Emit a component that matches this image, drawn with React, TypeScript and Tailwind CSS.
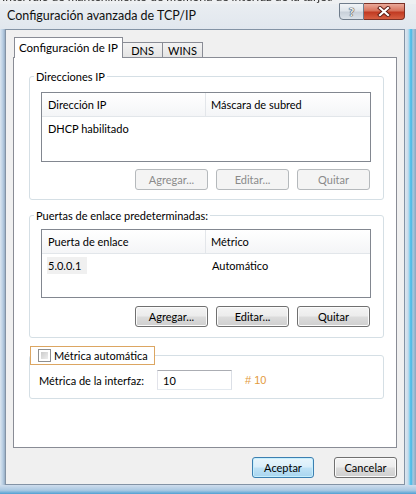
import React from "react";

function Btn({ label, disabled, w = "w-[73px]" }: { label: string; disabled?: boolean; w?: string }) {
  if (disabled) {
    return (
      <div className={`${w} h-[21px] shrink-0 flex items-center justify-center rounded-[3px] border border-[#b5b9bc] bg-[#f4f4f4] text-[#8a8a8a]`}>
        {label}
      </div>
    );
  }
  return (
    <div
      className={`${w} h-[21px] shrink-0 flex items-center justify-center rounded-[3px] border border-[#707070] bg-[linear-gradient(to_bottom,#f4f4f4_0%,#ececec_48%,#dcdcdc_52%,#cfcfcf_100%)] shadow-[inset_0_0_0_1px_#fbfbfb]`}
    >
      {label}
    </div>
  );
}

function ListView({ h, col1, col2, row1, row2, highlight }: { h: string; col1: string; col2: string; row1: string; row2?: string; highlight?: boolean }) {
  return (
    <div className={`w-[330px] ${h} border border-[#828790] bg-white`}>
      <div className="h-[24px] flex border-b border-[#e2e6ea] bg-[linear-gradient(to_bottom,#ffffff,#f4f5f7)]">
        <div className="w-[164px] border-r border-[#e3e6ea] pl-[6px] flex items-center">{col1}</div>
        <div className="pl-[5px] flex items-center">{col2}</div>
      </div>
      <div className="h-[22px] flex items-center">
        <div className="w-[164px] pl-[6px]">
          {highlight ? <span className="bg-[#f0f0f0] py-[2px] pr-[6px] -ml-[1px] pl-[1px]">{row1}</span> : row1}
        </div>
        {row2 ? <div className="pl-[6px]">{row2}</div> : null}
      </div>
    </div>
  );
}

export default function App() {
  return (
    <div className="w-[416px] h-[494px] overflow-hidden flex flex-col bg-[#c9d8e7] font-['Lato','Liberation_Sans',sans-serif] text-[11px] leading-[15px] text-black select-none">
      {/* title bar (with the window behind peeking at the very top) */}
      <div className="h-[29px] flex items-start pl-[7px] bg-[linear-gradient(to_bottom,#eef0f2_0px,#eef0f2_4px,#e9edf1_4px,#e1e7ee_100%)]">
        <div className="w-[325px] flex flex-col">
          <div className="h-[4px] overflow-hidden -ml-[5px]">
            <div className="-mt-[10px] text-[12px] leading-[13px] text-[#2e2e2e] whitespace-nowrap blur-[0.4px]">
              Intervalo de mantenimiento de memoria de interfaz de la tarjeta
            </div>
          </div>
          <div className="mt-[4px] text-[12.5px] leading-[16px] text-[#111] whitespace-nowrap">Configuración avanzada de TCP/IP</div>
        </div>
        <div className="mt-[3px] ml-[7px] w-[25px] h-[17px] rounded-bl-[4px] border border-[#6f7c8b] bg-[linear-gradient(to_bottom,#f1f4f7_0%,#dfe5eb_45%,#c8d0d9_55%,#dbe2e9_100%)] flex items-center justify-center">
          <span className="text-[12px] font-bold leading-[12px] text-[#f8f8f8] [text-shadow:0_0_1px_#303a45,0_0_1px_#303a45,0_0_1px_#303a45]">?</span>
        </div>
        <div className="mt-[3px] w-[41px] h-[17px] rounded-br-[4px] border border-l-0 border-[#7b3126] bg-[#d0503a] bg-[linear-gradient(to_bottom,#eaa999_0%,#d8735c_45%,#c13a22_55%,#d75f42_100%)] flex items-center justify-center">
          <svg width="14" height="11" viewBox="0 0 14 11">
            <path d="M3 2 L11 9 M11 2 L3 9" stroke="#5a1a12" strokeWidth="4" strokeLinecap="square" />
            <path d="M3 2 L11 9 M11 2 L3 9" stroke="#ffffff" strokeWidth="2.2" strokeLinecap="square" />
          </svg>
        </div>
      </div>

      {/* frame + client */}
      <div className="flex h-[456px]">
        <div className="w-[5px] bg-[linear-gradient(to_right,#dbe6f0,#b7cde2_60%,#97adc4)]" />
        <div className="w-[400px] h-[456px] border border-[#8393a5] bg-[#f0f0f0] pt-[7px] px-[7px] flex flex-col">
          {/* tabs */}
          <div className="h-[20px] flex items-end">
            <div className="relative z-10 ml-[1px] w-[109px] h-[21px] -mb-px border border-b-0 border-[#898c95] bg-white flex items-center justify-center pb-[2px] text-[11.5px]">
              Configuración de IP
            </div>
            <div className="-ml-px w-[41px] h-[15px] border border-b-0 border-[#898c95] bg-[linear-gradient(to_bottom,#f3f3f3,#e4e4e4)] flex items-center justify-center">
              DNS
            </div>
            <div className="-ml-px w-[41px] h-[15px] border border-b-0 border-[#898c95] bg-[linear-gradient(to_bottom,#f3f3f3,#e4e4e4)] flex items-center justify-center">
              WINS
            </div>
          </div>

          {/* panel */}
          <div className="w-[384px] h-[391px] border border-[#898c95] bg-white pl-[15px] pt-[11px] flex flex-col">
            {/* Direcciones IP */}
            <fieldset className="w-[355px] border border-[#d5dfe5] rounded-[3px] pb-[9px]">
              <legend className="ml-[4px] px-[2px] leading-[15px]">Direcciones IP</legend>
              <div className="px-[11px]">
                <div className="pt-[8px]">
                  <ListView h="h-[70px]" col1="Dirección IP" col2="Máscara de subred" row1="DHCP habilitado" />
                </div>
                <div className="mt-[7px] w-[330px] pr-[1px] flex justify-end gap-[8px]">
                  <Btn label="Agregar..." disabled />
                  <Btn label="Editar..." disabled />
                  <Btn label="Quitar" disabled />
                </div>
              </div>
            </fieldset>

            {/* Puertas de enlace */}
            <fieldset className="mt-[8px] w-[355px] border border-[#d5dfe5] rounded-[3px] pb-[10px]">
              <legend className="ml-[4px] px-[2px] leading-[15px]">Puertas de enlace predeterminadas:</legend>
              <div className="px-[11px]">
                <div className="pt-[6px]">
                  <ListView h="h-[69px]" col1="Puerta de enlace" col2="Métrico" row1="5.0.0.1" row2="Automático" highlight />
                </div>
                <div className="mt-[8px] w-[330px] pr-[1px] flex justify-end gap-[8px]">
                  <Btn label="Agregar..." />
                  <Btn label="Editar..." />
                  <Btn label="Quitar" />
                </div>
              </div>
            </fieldset>

            {/* Métrica */}
            <fieldset className="mt-[8px] w-[355px] border border-[#d5dfe5] rounded-[3px] pb-[8px]">
              <legend className="h-[19px] border border-[#dca662] pl-[7px] pr-[6px] flex items-center gap-[3px]">
                <span className="w-[13px] h-[13px] border border-[#8e8f8f] bg-white p-[2px] flex">
                  <span className="flex-1 bg-[linear-gradient(135deg,#cbcbcb,#eeeeee)]" />
                </span>
                <span>Métrica automática</span>
              </legend>
              <div className="pt-[5px] pl-[9px] flex items-center">
                <div className="w-[118px]">Métrica de la interfaz:</div>
                <div className="w-[75px] h-[20px] border border-[#abadb3] border-l-[#e2e3ea] border-r-[#dbdfe6] border-b-[#e3e9ef] bg-white pl-[5px] flex items-center">
                  10
                </div>
                <div className="ml-[13px] text-[11px] text-[#e39a3b] font-['Liberation_Sans',sans-serif]"># 10</div>
              </div>
            </fieldset>
          </div>

          {/* bottom buttons */}
          <div className="mt-[9px] flex justify-end gap-[20px]">
            <div className="w-[62px] h-[21px] flex items-center justify-center rounded-[3px] border border-[#3c7fb1] bg-[linear-gradient(to_bottom,#e8f5fc_0%,#d9eefa_48%,#bfe2f6_52%,#a8d5ef_100%)] shadow-[inset_0_0_0_1px_#c6effd]">
              Aceptar
            </div>
            <Btn label="Cancelar" w="w-[63px]" />
          </div>
        </div>
        <div className="w-[11px] bg-[linear-gradient(to_right,#dde7ef_0px,#c8daea_3px,#74cff0_5px,#3cb6e6_6px,#a9c8e0_8px,#8ea5bd_11px)]" />
      </div>

      {/* bottom frame */}
      <div className="flex-1 bg-[linear-gradient(to_bottom,#cfdded,#a9c8e2_60%,#4f9fd3)]" />
    </div>
  );
}
